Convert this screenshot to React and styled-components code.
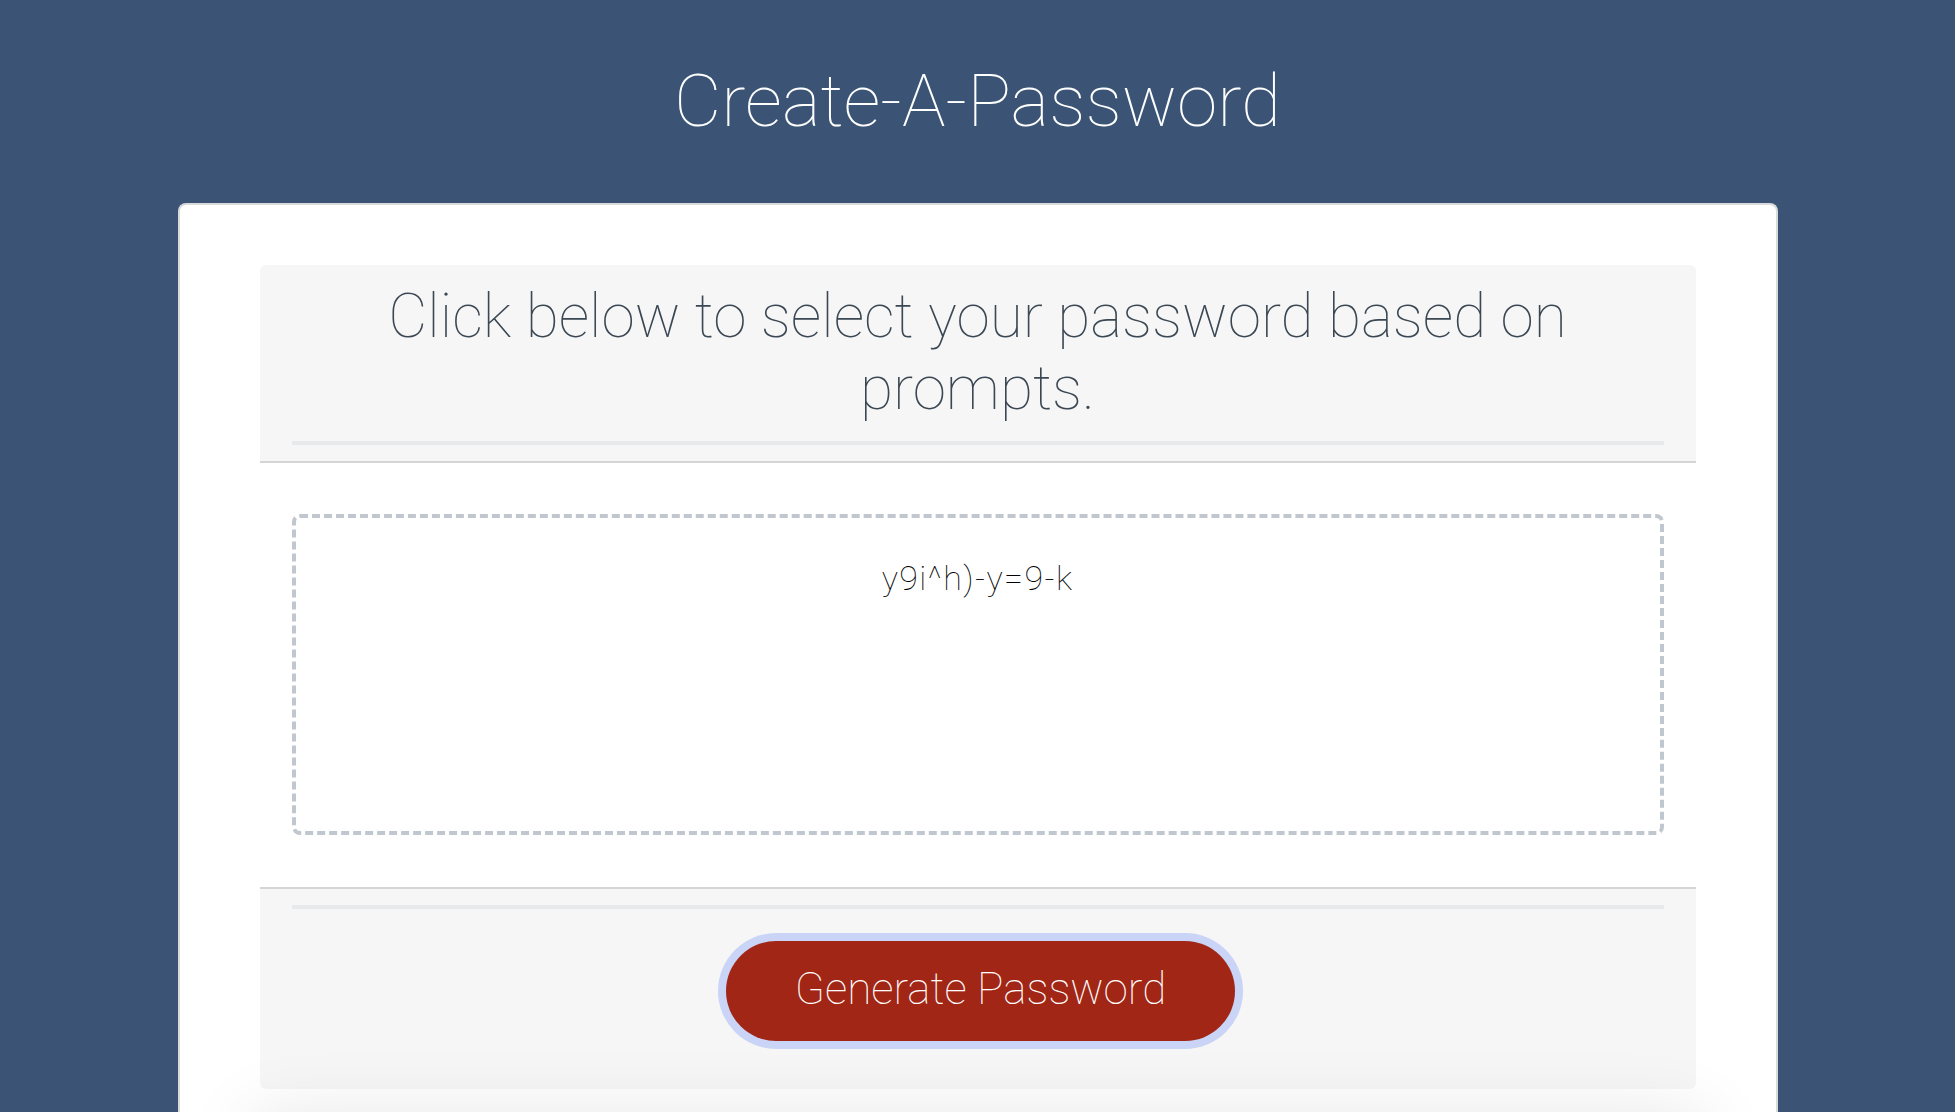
import React from 'react';
import styled, { createGlobalStyle } from 'styled-components';

const GlobalStyle = createGlobalStyle`
  *, *::before, *::after {
    box-sizing: border-box;
  }

  html, body {
    margin: 0;
    padding: 0;
    background-color: #3b5475;
    overflow: hidden;
    font-family: Roboto, "Liberation Sans", sans-serif;
  }
`;

// Layout
const Wrapper = styled.div`
  padding-top: 65px;
  display: flex;
  flex-direction: column;
  align-items: center;
`;

const Title = styled.h1`
  margin: 0 0 66px;
  font-size: 73px;
  line-height: 72px;
  font-weight: 100;
  color: #ffffff;
  text-align: center;
`;

const Card = styled.div`
  width: 1600px;
  background-color: #ffffff;
  border: 2px solid #dadada;
  border-bottom: none;
  border-radius: 8px 8px 0 0;
  padding: 60px 80px 0;
  color: #3b4854;
`;

const Rule = styled.div`
  height: 4px;
  background-color: #e8e9eb;
`;

const CardHeader = styled.div`
  background-color: #f6f6f6;
  border-radius: 6px 6px 0 0;
  border-bottom: 2px solid #d5d5d5;
  padding: 16px 32px 16px;
`;

const Prompt = styled.h2`
  margin: 0 0 16px;
  font-size: 60.3px;
  line-height: 72px;
  font-weight: 100;
  text-align: center;
  color: #3b4854;
`;

const CardBody = styled.div`
  padding: 51px 32px 52px;
`;

const PasswordBox = styled.textarea`
  display: block;
  width: 100%;
  height: 321px;
  appearance: none;
  resize: none;
  overflow: hidden;
  border: 4px dashed #c0c7cf;
  border-radius: 8px;
  padding: 40px 15px 0;
  font-family: Roboto, "Liberation Sans", sans-serif;
  font-size: 34px;
  line-height: 40px;
  font-weight: 100;
  letter-spacing: 1.4px;
  color: #000000;
  text-align: center;
  background: #ffffff;
  outline: none;
`;

const CardFooter = styled.div`
  background-color: #f6f6f6;
  border-top: 2px solid #d5d5d5;
  border-radius: 0 0 6px 6px;
  padding: 16px 32px 48px;
  text-align: center;
`;

const ButtonRow = styled.div`
  display: flex;
  justify-content: center;
  padding-top: 32px;
  padding-left: 6px;
`;

const GenerateButton = styled.button`
  border: none;
  border-radius: 60px;
  background-color: #a12616;
  color: #ffffff;
  font-family: Roboto, "Liberation Sans", sans-serif;
  font-size: 44px;
  line-height: 45px;
  font-weight: 100;
  padding: 26px 69px 29px 69px;
  box-shadow: 0 0 0 8px #c9d4f6;
  cursor: pointer;
`;

const Shade = styled.div`
  height: 200px;
  margin-top: 36px;
  border-radius: 8px;
  background-color: #f4f4f4;
  box-shadow: 0 0 70px 10px rgba(0, 0, 0, 0.1);
`;

const App = () => {
  return (
    <>
      <GlobalStyle />
      <Wrapper>
        <Title>Create-A-Password</Title>
        <Card>
          <CardHeader>
            <Prompt>Click below to select your password based on prompts.</Prompt>
            <Rule />
          </CardHeader>
          <CardBody>
            <PasswordBox readOnly value="y9i^h)-y=9-k" aria-label="Generated Password" />
          </CardBody>
          <CardFooter>
            <Rule />
            <ButtonRow>
              <GenerateButton>Generate Password</GenerateButton>
            </ButtonRow>
          </CardFooter>
          <Shade />
        </Card>
      </Wrapper>
    </>
  );
};

export default App;
